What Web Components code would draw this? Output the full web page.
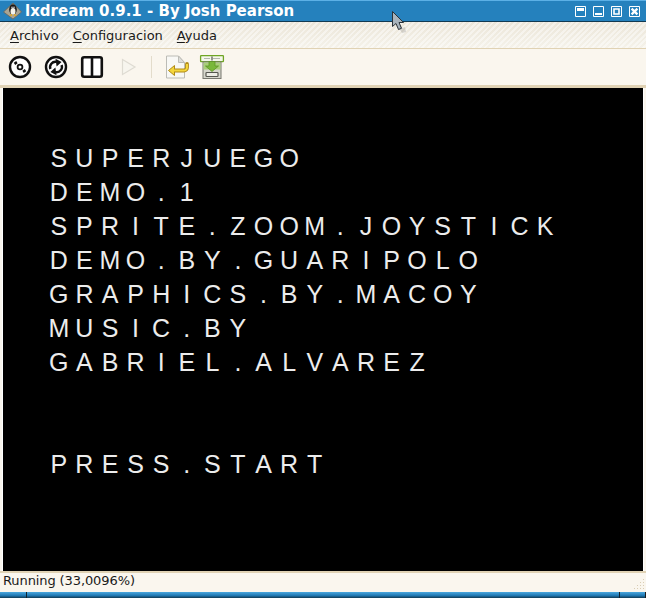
<!DOCTYPE html>
<html>
<head>
<meta charset="utf-8">
<title>lxdream</title>
<style>
	html, body { margin: 0; padding: 0; width: 646px; height: 598px; overflow: hidden; background: #faf6ee; }
	body { font-family: "DejaVu Sans", sans-serif; }
</style>
</head>
<body>
<lx-window>
	<lx-titlebar slot="title">lxdream 0.9.1 - By Josh Pearson</lx-titlebar>
	<lx-menubar slot="menu">
		<lx-menu key="A" rest="rchivo"></lx-menu>
		<lx-menu key="C" rest="onfiguracion"></lx-menu>
		<lx-menu key="A" rest="yuda"></lx-menu>
	</lx-menubar>
	<lx-toolbar slot="tools">
		<tool-button icon="disc"></tool-button>
		<tool-button icon="reset"></tool-button>
		<tool-button icon="pause"></tool-button>
		<tool-button icon="play"></tool-button>
		<tool-sep></tool-sep>
		<tool-button icon="load"></tool-button>
		<tool-button icon="save"></tool-button>
	</lx-toolbar>
	<lx-screen slot="screen">
		<game-line>SUPERJUEGO</game-line>
		<game-line>DEMO.1</game-line>
		<game-line>SPRITE.ZOOM.JOYSTICK</game-line>
		<game-line>DEMO.BY.GUARIPOLO</game-line>
		<game-line>GRAPHICS.BY.MACOY</game-line>
		<game-line>MUSIC.BY</game-line>
		<game-line>GABRIEL.ALVAREZ</game-line>
		<game-line></game-line>
		<game-line></game-line>
		<game-line>PRESS.START</game-line>
	</lx-screen>
	<lx-status slot="status">Running (33,0096%)</lx-status>
	<lx-taskbar slot="taskbar"></lx-taskbar>
</lx-window>
<lx-cursor></lx-cursor>

<script>
	// Plain helper, every element below is just a style block plus some markup
	function shadow(el, html) {
		el.attachShadow({ mode: 'open' }).innerHTML = html;
	}

	class LxWindow extends HTMLElement {
		constructor() {
			super();
			shadow(this, `
			<style>
				:host { display: flex; flex-direction: column; width: 646px; height: 598px; }
			</style>
			<slot name="title"></slot>
			<slot name="menu"></slot>
			<slot name="tools"></slot>
			<slot name="screen"></slot>
			<slot name="status"></slot>
			<slot name="taskbar"></slot>
			`);
		}
	}

	class LxTitlebar extends HTMLElement {
		constructor() {
			super();
			shadow(this, `
			<style>
				:host {
					display: flex; align-items: center; box-sizing: border-box; height: 22px;
					background: #2581bd; border-top: 1px solid #5cb0e6; border-bottom: 1px solid #123a52;
					color: #fff; font: bold 15px "DejaVu Sans", sans-serif; padding-left: 3px;
				}
				.logo { width: 19px; height: 18px; flex: none; margin-right: 3px; }
				.text { flex: 1; white-space: pre; }
				.btns { display: flex; gap: 7px; margin-right: 6px; }
				.btns svg { width: 11px; height: 11px; display: block; }
			</style>
			<svg class="logo" viewBox="0 0 19 18">
				<path d="M.5 10 10 1l8.500 9-8.500 7z" fill="#aaa594" stroke="#6a6659" stroke-width=".8"/>
				<ellipse cx="10" cy="7.500" rx="3.800" ry="5.200" fill="#1a1a1a"/>
				<ellipse cx="10" cy="9.400" rx="2.500" ry="3.300" fill="#f4f2ea"/>
				<path d="M6.200 13.800h3.200l-.8-2zM10.600 13.800h3.200l-2.400-2z" fill="#e8a818"/>
				<circle cx="9" cy="5.200" r=".7" fill="#fff"/><circle cx="11" cy="5.200" r=".7" fill="#fff"/>
			</svg>
			<span class="text"><slot></slot></span>
			<span class="btns">
				<svg viewBox="0 0 11 11"><path d="M.5.500h10v10H.5z" fill="none" stroke="#fff"/><path d="M2 2h7v3H2z" fill="#fff"/></svg>
				<svg viewBox="0 0 11 11"><path d="M.5.500h10v10H.5z" fill="none" stroke="#fff"/><path d="M2 7h7v2H2z" fill="#fff"/></svg>
				<svg viewBox="0 0 11 11"><path d="M.5.500h10v10H.5z" fill="none" stroke="#fff"/><path d="M3 3h5v5H3z" fill="none" stroke="#fff" stroke-width="1.600"/></svg>
				<svg viewBox="0 0 11 11"><path d="M.5.500h10v10H.5z" fill="none" stroke="#fff"/><path d="M2.600 2.600l5.800 5.800M8.400 2.600 2.600 8.400" stroke="#fff" stroke-width="2.200"/></svg>
			</span>
			`);
		}
	}

	class LxMenubar extends HTMLElement {
		constructor() {
			super();
			shadow(this, `
			<style>
				:host {
					display: flex; gap: 14px; align-items: center; box-sizing: border-box;
					height: 27px; padding: 1px 0 0 10px;
					border-bottom: 1px solid #e0d2b4;
					background:
						repeating-linear-gradient(135deg, rgba(255,255,255,.45) 0 2px, rgba(255,255,255,0) 2px 4px),
						linear-gradient(#ebe5d8, #f5f2ea);
				}
			</style>
			<slot></slot>
			`);
		}
	}

	class LxMenu extends HTMLElement {
		constructor() {
			super();
			shadow(this, `
			<style>
				:host { display: block; font: 13px "DejaVu Sans", sans-serif; color: #1a1a1a; }
				u { text-underline-offset: 2px; }
			</style>
			<u>${this.getAttribute('key')}</u>${this.getAttribute('rest')}
			`);
		}
	}

	class LxToolbar extends HTMLElement {
		constructor() {
			super();
			shadow(this, `
			<style>
				:host {
					display: flex; align-items: center; box-sizing: border-box;
					height: 39px; padding: 0 0 0 2px; background: #faf6ee;
					border-bottom: 3px solid #e0d2b4;
				}
			</style>
			<slot></slot>
			`);
		}
	}

	class ToolSep extends HTMLElement {
		constructor() {
			super();
			shadow(this, `
			<style>
				:host { display: block; width: 1px; height: 22px; margin: 0 6px 0 5px; background: #e3dccb; }
			</style>
			`);
		}
	}

	const ICONS = {
		disc: `<circle cx="12" cy="12" r="10" fill="#fff" stroke="#111" stroke-width="2.400"/>
			<circle cx="12" cy="12" r="2.400" fill="#fff" stroke="#111" stroke-width="1.800"/>
			<path d="M5.800 7.800 8.200 6l1.400 2.200-2.400 1.800zM14.400 15.800l2.400-1.800 1.400 2.200-2.400 1.800z" fill="#111"/>`,
		reset: `<circle cx="12" cy="12" r="10" fill="#fff" stroke="#111" stroke-width="2.400"/>
			<path d="M6.400 14a5.400 5.400 0 0 1 6-7.200" fill="none" stroke="#111" stroke-width="2.400"/>
			<path d="M17.600 10a5.400 5.400 0 0 1-6 7.200" fill="none" stroke="#111" stroke-width="2.400"/>
			<path d="M11.500 3.800 17.600 7l-5 4.400zM12.500 20.200 6.400 17l5-4.400z" fill="#111"/>`,
		pause: `<rect x="2.200" y="2.200" width="19.600" height="19.600" rx="2" fill="#fff" stroke="#111" stroke-width="2.600"/>
			<path d="M12 2v20" stroke="#111" stroke-width="2.600"/>`,
		play: `<path d="M6.500 4.500 19 12 6.500 19.500z" fill="#f7f5ee" stroke="#dedbd2" stroke-width="1.200"/>`,
		load: `<path d="M2.500 1h12l6 6.500V23h-18z" fill="#f8f8f5" stroke="#bcbcb6"/>
			<path d="M14.500 1v6.500h6z" fill="#dededa" stroke="#bcbcb6"/>
			<path d="M23 9v3.500a3 3 0 0 1-3 3H9" fill="none" stroke="#b08a18" stroke-width="3.800" stroke-linecap="round"/>
			<path d="M10.500 10.500 4.500 15.500l6 5z" fill="#f4d63c" stroke="#b08a18"/>
			<path d="M23 9v3.500a3 3 0 0 1-3 3H9" fill="none" stroke="#f4d63c" stroke-width="2"/>`,
		save: `<rect x=".6" y=".6" width="22.800" height="6" rx=".6" fill="#f4f8ea" stroke="#6fa524" stroke-width="1.300"/>
			<path d="M4 3.500h6M13 3.500h7" stroke="#b5b5ae" stroke-width="1.200"/>
			<path d="M11.500 1.500h1v4h-1z" fill="#333"/>
			<rect x="3" y="7" width="18" height="16.500" fill="#d6d6cc" stroke="#77776f"/>
			<path d="M3.500 7.500h17v7h-17z" fill="#a9cf7a"/>
			<path d="M9 6.500h6V11h3.500L12 16.500 5.500 11H9z" fill="#79b83a" stroke="#5d9426" stroke-width=".8"/>
			<rect x="6" y="17.500" width="12" height="4" rx=".8" fill="#ecece4" stroke="#55554f" stroke-width="1.200"/>`
	};

	class ToolButton extends HTMLElement {
		constructor() {
			super();
			shadow(this, `
			<style>
				:host { display: flex; justify-content: center; align-items: center; width: 36px; height: 36px; flex: none; }
				svg { width: 24px; height: 24px; display: block; overflow: visible; }
			</style>
			<svg viewBox="0 0 24 24">${ICONS[this.getAttribute('icon')]}</svg>
			`);
		}
	}

	class LxScreen extends HTMLElement {
		constructor() {
			super();
			shadow(this, `
			<style>
				:host {
					display: block; box-sizing: border-box; height: 483px;
					margin: 0 2px 0 2px; padding: 53px 0 0 43px;
					background: #000; border: solid #fff; border-width: 0 1px 0 1px;
				}
			</style>
			<slot></slot>
			`);
		}
	}

	// Widths of the Arial capitals, the game font sits each glyph in the middle of a fixed cell
	const GLYPHS = { A: 667, B: 667, C: 722, D: 722, E: 667, G: 778, H: 722, I: 278, J: 500, K: 667, L: 556, M: 833, N: 722, O: 778, P: 667, R: 722, S: 667, T: 611, U: 722, V: 667, Y: 667, Z: 611, '.': 278, 1: 556 };
	const GAME_SIZE = 25;
	const GAME_PITCH = 25.6;

	class GameLine extends HTMLElement {
		constructor() {
			super();
			const cells = [...this.textContent.trim()].map((ch) => {
				const pad = (GAME_PITCH - (GLYPHS[ch] / 1000) * GAME_SIZE) / 2;
				return `<span style="padding:0 ${pad.toFixed(2)}px">${ch}</span>`;
			}).join('');
			shadow(this, `
			<style>
				:host {
					display: block; height: 34px; white-space: nowrap;
					font: ${GAME_SIZE}px/34px "Liberation Sans", sans-serif; color: #ececec;
					font-kerning: none;
				}
			</style>
			${cells}
			`);
		}
	}

	class LxStatus extends HTMLElement {
		constructor() {
			super();
			shadow(this, `
			<style>
				:host {
					display: block; box-sizing: border-box; height: 21px; padding: 0 0 0 3px;
					border-top: 2px solid #e0d2b4; background: #faf6ee;
					font: 13px "DejaVu Sans", sans-serif; letter-spacing: -0.1px; color: #1a1a1a; position: relative;
				}
				.grip { position: absolute; right: 1px; bottom: 1px; width: 12px; height: 12px; }
			</style>
			<slot></slot>
			<svg class="grip" viewBox="0 0 12 12" fill="#d9cdb4">
				<path d="M10 0h1v1h-1zM7 3h1v1H7zM10 3h1v1h-1zM4 6h1v1H4zM7 6h1v1H7zM10 6h1v1h-1zM1 9h1v1H1zM4 9h1v1H4zM7 9h1v1H7zM10 9h1v1h-1z"/>
			</svg>
			`);
		}
	}

	class LxTaskbar extends HTMLElement {
		constructor() {
			super();
			shadow(this, `
			<style>
				:host {
					display: flex; box-sizing: border-box; height: 6px;
					background: linear-gradient(#4aa7de, #1f78b2 60%, #123a52);
					border-right: 1px solid #1c1c1c;
				}
				i { display: block; width: 1px; background: #10232f; }
				.a { margin-left: 26px; }
				.b { margin-left: auto; margin-right: 25px; }
			</style>
			<i class="a"></i><i class="b"></i>
			`);
		}
	}

	class LxCursor extends HTMLElement {
		constructor() {
			super();
			shadow(this, `
			<style>
				:host { display: block; position: absolute; left: 390px; top: 10px; width: 22px; height: 24px; }
			</style>
			<svg width="22" height="24" viewBox="0 0 22 24">
				<path d="M6 13l3-1 3 6 3-1 1 5-4 1z" fill="#8a8a86" opacity=".3"/>
				<path d="M2.500 1.500v15l3.500-3 2.500 6 3-1.200-2.500-5.800h4.500z" fill="#a9b4bc" stroke="#2b3238"/>
			</svg>
			`);
		}
	}

	customElements.define('lx-window', LxWindow);
	customElements.define('lx-titlebar', LxTitlebar);
	customElements.define('lx-menubar', LxMenubar);
	customElements.define('lx-menu', LxMenu);
	customElements.define('lx-toolbar', LxToolbar);
	customElements.define('tool-sep', ToolSep);
	customElements.define('tool-button', ToolButton);
	customElements.define('lx-screen', LxScreen);
	customElements.define('game-line', GameLine);
	customElements.define('lx-status', LxStatus);
	customElements.define('lx-taskbar', LxTaskbar);
	customElements.define('lx-cursor', LxCursor);
</script>
</body>
</html>
